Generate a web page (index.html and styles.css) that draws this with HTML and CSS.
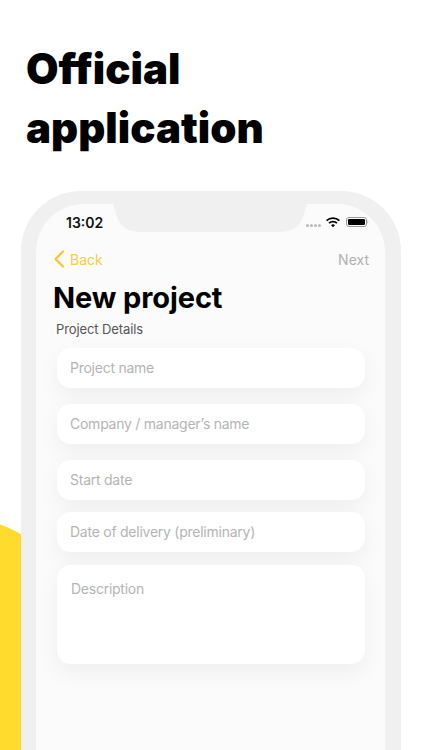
FILE: index.html
```html
<!DOCTYPE html>
<html lang="en">
<head>
<meta charset="utf-8">
<title>Official application</title>
<link rel="stylesheet" href="styles.css">
</head>
<body>
<div class="page">
  <div class="blob"></div>
  <h1 class="headline">Official<br>application</h1>
  <div class="phone">
    <div class="screen">
      <svg class="notch" width="194" height="29" viewBox="0 0 194 29"><path d="M0 0H194C193 3 192 6 191 10C188 22 180 28 166 28H28C14 28 6 22 3 10C2 6 1 3 0 0Z" fill="#f0f0f0"/></svg>
      <div class="status">
        <span class="time">13:02</span>
        <div class="indicators">
          <span class="signal"><i></i><i></i><i></i><i></i></span>
          <svg class="wifi" width="14" height="11" viewBox="0 0 15 11"><path d="M7.5 10.6 5.4 8.4a3 3 0 0 1 4.200 0Z M3.900 6.900 2.600 5.500a7 7 0 0 1 9.800 0l-1.300 1.400a5.100 5.100 0 0 0-7.200 0Z M1.300 4.200 0 2.900a10.700 10.700 0 0 1 15 0l-1.300 1.300a8.900 8.900 0 0 0-12.400 0Z" fill="#000"/></svg>
          <svg class="battery" width="23" height="10" viewBox="0 0 23 10"><rect x=".5" y=".5" width="20" height="9" rx="2.500" fill="none" stroke="#999" stroke-width="1"/><rect x="2" y="2" width="17" height="6" rx="1.200" fill="#000"/><path d="M21.500 3.500c1 .3 1 2.700 0 3Z" fill="#999"/></svg>
        </div>
      </div>
      <nav class="nav">
        <a class="back">
          <svg width="12" height="18" viewBox="0 0 12 18"><path d="M10 1.500 2.500 9 10 16.500" fill="none" stroke="#f7c62f" stroke-width="2.200" stroke-linecap="round" stroke-linejoin="round"/></svg>
          <span>Back</span>
        </a>
        <a class="next">Next</a>
      </nav>
      <h2 class="title">New project</h2>
      <p class="section">Project Details</p>
      <form class="fields">
        <div class="field">Project name</div>
        <div class="field">Company / manager’s name</div>
        <div class="field short">Start date</div>
        <div class="field tight">Date of delivery (preliminary)</div>
        <div class="field area">Description</div>
      </form>
    </div>
  </div>
</div>
</body>
</html>
```

FILE: styles.css
```css
* { box-sizing: border-box; }
html, body { margin: 0; padding: 0; background: #fff; }
.page {
  position: relative;
  width: 422px;
  height: 750px;
  overflow: hidden;
  font-family: Inter, "Liberation Sans", sans-serif;
  padding-top: 39px;
}
.blob {
  position: absolute;
  left: -190px;
  top: 517px;
  width: 300px;
  height: 400px;
  border-radius: 50%;
  background: #ffdb2d;
}
.headline {
  position: relative;
  margin: 0 0 0 26px;
  font-size: 42px;
  line-height: 59px;
  font-weight: 900;
  color: #000;
}
.phone {
  position: relative;
  width: 380px;
  height: 620px;
  margin: 34px 0 0 21px;
  padding: 13px 16px 0 15px;
  background: #f0f0f0;
  border-radius: 60px 60px 0 0;
}
.screen {
  position: relative;
  height: 100%;
  background: #fbfbfb;
  border-radius: 48px 48px 0 0;
  overflow: hidden;
}
.notch {
  position: absolute;
  left: 77px;
  top: 0;
}
.status {
  display: flex;
  justify-content: space-between;
  align-items: center;
  height: 38px;
  padding: 0 16px 2px 30px;
}
.time {
  position: relative;
  font-size: 14px;
  font-weight: 600;
  color: #111;
}
.indicators {
  position: relative;
  display: flex;
  align-items: center;
  gap: 6px;
}
.signal {
  display: flex;
  gap: 1px;
  margin: 6px -1px 0 0;
}
.signal i {
  width: 3px;
  height: 3px;
  border-radius: 50%;
  background: #bbb;
}
.nav {
  display: flex;
  justify-content: space-between;
  align-items: center;
  height: 24px;
  margin-top: 5px;
  padding: 0 16px 0 17px;
  font-size: 14px;
}
.back {
  display: flex;
  align-items: center;
  gap: 5px;
  color: #f7cb45;
}
.next { color: #b0b0b0; }
.title {
  margin: 9px 0 0 17px;
  font-size: 29px;
  line-height: 36px;
  font-weight: 700;
  letter-spacing: -.1px;
  color: #000;
}
.section {
  margin: 5px 0 0 20px;
  font-size: 13px;
  line-height: 16px;
  letter-spacing: -.1px;
  color: #555;
}
.fields {
  display: flex;
  flex-direction: column;
  margin: 11px 0 0 21px;
  width: 308px;
}
.field {
  height: 40px;
  padding: 0 13px 1px;
  margin-bottom: 16px;
  display: flex;
  align-items: center;
  font-size: 14px;
  letter-spacing: -.25px;
  color: #b4b4b4;
  background: #fff;
  border-radius: 14px;
  box-shadow: 0 8px 22px rgba(0, 0, 0, .055);
}
.field.short { margin-bottom: 12px; }
.field.tight { margin-bottom: 13px; }
.field.area {
  height: 99px;
  align-items: flex-start;
  padding: 15px 14px;
  margin-bottom: 0;
}
```
